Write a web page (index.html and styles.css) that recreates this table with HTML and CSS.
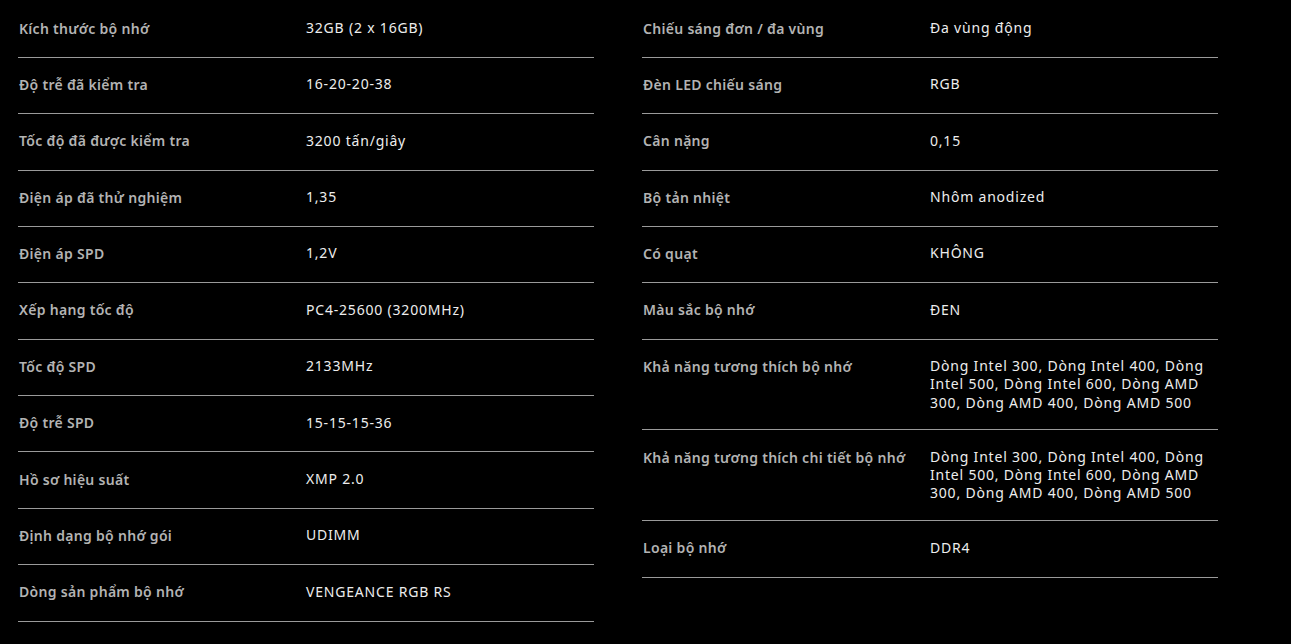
FILE: index.html
```html
<!DOCTYPE html>
<html lang="vi">
<head>
<meta charset="utf-8">
<title>Thông số kỹ thuật</title>
<link rel="stylesheet" href="styles.css">
</head>
<body>
<div class="specs">
  <div class="col">
    <div class="row"><div class="label">Kích thước bộ nhớ</div><div class="value">32GB (2 x 16GB)</div></div>
    <div class="row"><div class="label">Độ trễ đã kiểm tra</div><div class="value">16-20-20-38</div></div>
    <div class="row"><div class="label">Tốc độ đã được kiểm tra</div><div class="value">3200 tấn/giây</div></div>
    <div class="row"><div class="label">Điện áp đã thử nghiệm</div><div class="value">1,35</div></div>
    <div class="row"><div class="label">Điện áp SPD</div><div class="value">1,2V</div></div>
    <div class="row"><div class="label">Xếp hạng tốc độ</div><div class="value">PC4-25600 (3200MHz)</div></div>
    <div class="row"><div class="label">Tốc độ SPD</div><div class="value">2133MHz</div></div>
    <div class="row"><div class="label">Độ trễ SPD</div><div class="value">15-15-15-36</div></div>
    <div class="row"><div class="label">Hồ sơ hiệu suất</div><div class="value">XMP 2.0</div></div>
    <div class="row"><div class="label">Định dạng bộ nhớ gói</div><div class="value">UDIMM</div></div>
    <div class="row"><div class="label">Dòng sản phẩm bộ nhớ</div><div class="value">VENGEANCE RGB RS</div></div>
  </div>
  <div class="col">
    <div class="row"><div class="label">Chiếu sáng đơn / đa vùng</div><div class="value">Đa vùng động</div></div>
    <div class="row"><div class="label">Đèn LED chiếu sáng</div><div class="value">RGB</div></div>
    <div class="row"><div class="label">Cân nặng</div><div class="value">0,15</div></div>
    <div class="row"><div class="label">Bộ tản nhiệt</div><div class="value">Nhôm anodized</div></div>
    <div class="row"><div class="label">Có quạt</div><div class="value">KHÔNG</div></div>
    <div class="row"><div class="label">Màu sắc bộ nhớ</div><div class="value">ĐEN</div></div>
    <div class="row"><div class="label">Khả năng tương thích bộ nhớ</div><div class="value">Dòng Intel 300, Dòng Intel 400, Dòng Intel 500, Dòng Intel 600, Dòng AMD 300, Dòng AMD 400, Dòng AMD 500</div></div>
    <div class="row"><div class="label">Khả năng tương thích chi tiết bộ nhớ</div><div class="value">Dòng Intel 300, Dòng Intel 400, Dòng Intel 500, Dòng Intel 600, Dòng AMD 300, Dòng AMD 400, Dòng AMD 500</div></div>
    <div class="row"><div class="label">Loại bộ nhớ</div><div class="value">DDR4</div></div>
  </div>
</div>
</body>
</html>
```
FILE: styles.css
```css
html, body {
  margin: 0;
  padding: 0;
  background: #000;
}
body {
  font-family: "Noto Sans", "DejaVu Sans", sans-serif;
  font-size: 14px;
  -webkit-font-smoothing: antialiased;
}
.specs {
  display: flex;
  align-items: flex-start;
  gap: 48px;
  padding: 1.4px 0 0 18px;
}
.col {
  width: 576px;
  display: flex;
  flex-direction: column;
}
.row {
  display: grid;
  grid-template-columns: 288px 1fr;
  align-items: start;
  padding: 16.2px 0 18.2px;
  border-bottom: 1px solid #9a9a9a;
}
.label {
  padding-left: 1px;
  color: #b3b3b3;
  font-weight: 600;
  letter-spacing: 0.3px;
  line-height: 21px;
}
.value {
  color: #ededed;
  letter-spacing: 0.8px;
  line-height: 18.2px;
  padding-top: 1.4px;
  margin-bottom: -0.6px;
}
```
